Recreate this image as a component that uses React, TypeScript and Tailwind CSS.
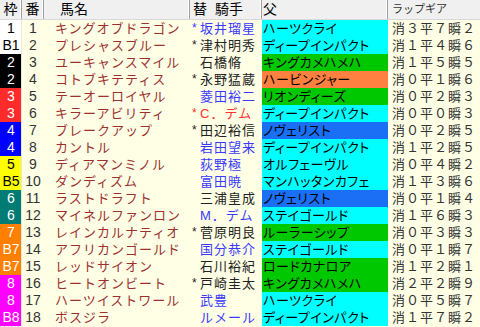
import React from "react";

type Row = {
  w: string;
  wBg: string;
  wFg: string;
  n: number;
  name: string;
  star: boolean;
  jockey: string;
  jc: string;
  sire: string;
  sBg: string;
  gear: string;
};

const CY = "bg-[#00ffff]";
const GR = "bg-[#00c800]";
const OR = "bg-[#ff8040]";
const BL = "bg-[#1a6ff5]";
const BLUE = "text-[#3a3aff]";
const BLK = "text-[#222222]";
const RED = "text-[#ff3030]";

const W1 = "bg-white";
const W2 = "bg-black";
const W3 = "bg-[#ff2a2a]";
const W4 = "bg-[#0000ff]";
const W5 = "bg-[#ffff00]";
const W6 = "bg-[#007c74]";
const W7 = "bg-[#ff8000]";
const W8 = "bg-[#ff00ff]";

const rows: Row[] = [
  { w: "1", wBg: W1, wFg: "text-black", n: 1, name: "キングオブドラゴン", star: true, jockey: "坂井瑠星", jc: BLUE, sire: "ハーツクライ", sBg: CY, gear: "消３平７瞬２" },
  { w: "B1", wBg: W1, wFg: "text-black", n: 2, name: "プレシャスブルー", star: true, jockey: "津村明秀", jc: BLK, sire: "ディープインパクト", sBg: CY, gear: "消１平４瞬６" },
  { w: "2", wBg: W2, wFg: "text-white", n: 3, name: "ユーキャンスマイル", star: false, jockey: "石橋脩", jc: BLK, sire: "キングカメハメハ", sBg: GR, gear: "消１平５瞬５" },
  { w: "2", wBg: W2, wFg: "text-white", n: 4, name: "コトブキテティス", star: true, jockey: "永野猛蔵", jc: BLK, sire: "ハービンジャー", sBg: OR, gear: "消０平１瞬６" },
  { w: "3", wBg: W3, wFg: "text-white", n: 5, name: "テーオーロイヤル", star: false, jockey: "菱田裕二", jc: BLUE, sire: "リオンディーズ", sBg: GR, gear: "消０平２瞬３" },
  { w: "3", wBg: W3, wFg: "text-white", n: 6, name: "キラーアビリティ", star: true, jockey: "C．デム", jc: RED, sire: "ディープインパクト", sBg: CY, gear: "消０平０瞬３" },
  { w: "4", wBg: W4, wFg: "text-white", n: 7, name: "ブレークアップ", star: true, jockey: "田辺裕信", jc: BLK, sire: "ノヴェリスト", sBg: BL, gear: "消０平２瞬５" },
  { w: "4", wBg: W4, wFg: "text-white", n: 8, name: "カントル", star: false, jockey: "岩田望来", jc: BLUE, sire: "ディープインパクト", sBg: CY, gear: "消１平２瞬５" },
  { w: "5", wBg: W5, wFg: "text-black", n: 9, name: "ディアマンミノル", star: false, jockey: "荻野極", jc: BLUE, sire: "オルフェーヴル", sBg: CY, gear: "消０平４瞬２" },
  { w: "B5", wBg: W5, wFg: "text-black", n: 10, name: "ダンディズム", star: false, jockey: "富田暁", jc: BLUE, sire: "マンハッタンカフェ", sBg: CY, gear: "消１平３瞬６" },
  { w: "6", wBg: W6, wFg: "text-white", n: 11, name: "ラストドラフト", star: false, jockey: "三浦皇成", jc: BLK, sire: "ノヴェリスト", sBg: BL, gear: "消０平１瞬４" },
  { w: "6", wBg: W6, wFg: "text-white", n: 12, name: "マイネルファンロン", star: false, jockey: "M．デム", jc: BLUE, sire: "ステイゴールド", sBg: CY, gear: "消１平６瞬３" },
  { w: "7", wBg: W7, wFg: "text-white", n: 13, name: "レインカルナティオ", star: true, jockey: "菅原明良", jc: BLK, sire: "ルーラーシップ", sBg: GR, gear: "消０平３瞬３" },
  { w: "B7", wBg: W7, wFg: "text-white", n: 14, name: "アフリカンゴールド", star: false, jockey: "国分恭介", jc: BLUE, sire: "ステイゴールド", sBg: CY, gear: "消０平１瞬７" },
  { w: "B7", wBg: W7, wFg: "text-white", n: 15, name: "レッドサイオン", star: false, jockey: "石川裕紀", jc: BLK, sire: "ロードカナロア", sBg: GR, gear: "消１平２瞬１" },
  { w: "8", wBg: W8, wFg: "text-white", n: 16, name: "ヒートオンビート", star: true, jockey: "戸崎圭太", jc: BLK, sire: "キングカメハメハ", sBg: GR, gear: "消２平２瞬９" },
  { w: "8", wBg: W8, wFg: "text-white", n: 17, name: "ハーツイストワール", star: false, jockey: "武豊", jc: BLUE, sire: "ハーツクライ", sBg: CY, gear: "消０平５瞬７" },
  { w: "B8", wBg: W8, wFg: "text-white", n: 18, name: "ボスジラ", star: false, jockey: "ルメール", jc: BLUE, sire: "ディープインパクト", sBg: CY, gear: "消１平７瞬２" },
];

const font = "font-['Liberation_Sans','Noto_Sans_CJK_JP',sans-serif]";
const cols = "grid grid-cols-[22px_22px_146px_72px_126px_92px]";

function HeadCell({ children, className = "" }: { children?: React.ReactNode; className?: string }) {
  return (
    <div className={`h-[19px] flex items-center border-r border-[#a0a0a0] shadow-[inset_-1px_0_0_#ffffff] ${className}`}>
      {children}
    </div>
  );
}

export default function App() {
  return (
    <div className={`w-[480px] h-[327px] bg-[#ffffe6] overflow-hidden ${font}`}>
      <div className={`${cols} bg-[#f0f0f0] border-b border-[#d8d8d8] text-[14px] text-black leading-[19px]`}>
        <HeadCell className="justify-center">枠</HeadCell>
        <HeadCell className="justify-center">番</HeadCell>
        <HeadCell className="pl-[16px]">馬名</HeadCell>
        <HeadCell className="pl-[3px]">
          <span>替</span>
          <span className="ml-[8px]">騎手</span>
        </HeadCell>
        <HeadCell className="pl-[1px]">父</HeadCell>
        <div className="h-[19px] flex items-center pl-[4px] text-[11px] text-[#333]">ラップギア</div>
      </div>
      {rows.map((r) => (
        <div key={r.n} className={`${cols} h-[17px] leading-[17px]`}>
          <div className={`${r.wBg} ${r.wFg} border-b border-r border-[#e8e8e0] text-[14px] text-center pl-[1px]`}>{r.w}</div>
          <div className="text-[14px] text-[#333] text-center">{r.n}</div>
          <div className="pl-[11px] text-[13px] tracking-[1px] text-[#9c3030] whitespace-nowrap overflow-hidden">{r.name}</div>
          <div className={`pl-[2px] text-[13px] tracking-[1px] whitespace-nowrap overflow-hidden flex ${r.jc}`}>
            <span className="w-[8px] text-[12px]">{r.star ? "*" : ""}</span>
            <span>{r.jockey}</span>
          </div>
          <div className={`${r.sBg} border-b border-[#ffffe6] pl-[1px] text-[13px] tracking-[0.5px] text-black whitespace-nowrap overflow-hidden [font-feature-settings:'palt']`}>{r.sire}</div>
          <div className="pl-[4px] text-[13px] tracking-[1px] text-[#333] whitespace-nowrap">{r.gear}</div>
        </div>
      ))}
    </div>
  );
}
